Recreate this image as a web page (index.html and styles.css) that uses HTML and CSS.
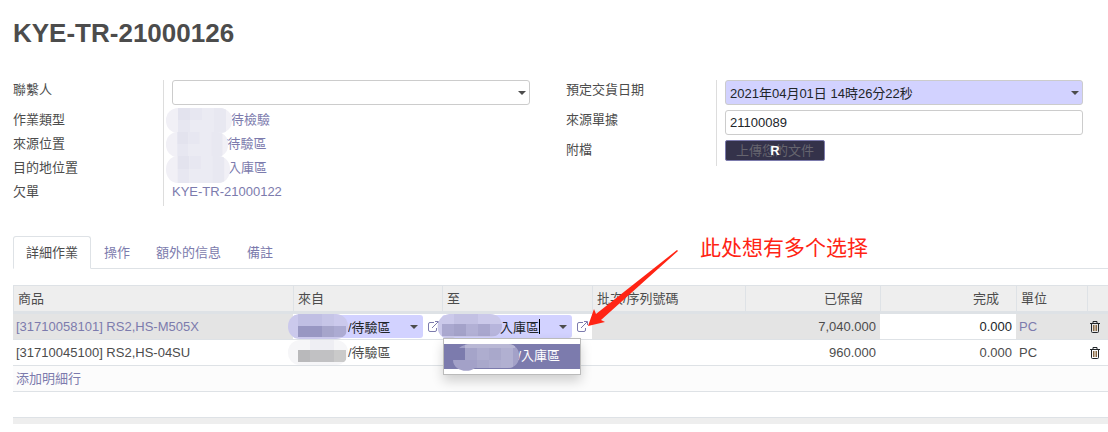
FILE: index.html
```html
<!DOCTYPE html>
<html lang="zh-Hant">
<head>
<meta charset="utf-8">
<title>KYE-TR-21000126</title>
<link rel="stylesheet" href="styles.css">
</head>
<body>

<main class="sheet">
  <h1 class="title">KYE-TR-21000126</h1>

  <div class="groups">
    <div class="group">
      <div class="row tall">
        <label for="partner">聯繫人</label>
        <div class="value"><div class="field caret"><input id="partner" type="text"></div></div>
      </div>
      <div class="row">
        <span class="label">作業類型</span>
        <div class="value"><a href="#" class="masked m1"><svg class="blob" width="68" height="26"><use href="#pale"/></svg>待檢驗</a></div>
      </div>
      <div class="row">
        <span class="label">來源位置</span>
        <div class="value"><a href="#" class="masked m2"><svg class="blob" width="64" height="26" viewBox="0 0 68 26" preserveAspectRatio="none"><use href="#pale"/></svg>/待驗區</a></div>
      </div>
      <div class="row">
        <span class="label">目的地位置</span>
        <div class="value"><a href="#" class="masked m3"><svg class="blob" width="66" height="28" viewBox="0 0 68 26" preserveAspectRatio="none"><use href="#pale"/></svg>入庫區</a></div>
      </div>
      <div class="row">
        <span class="label">欠單</span>
        <div class="value"><a href="#">KYE-TR-21000122</a></div>
      </div>
    </div>

    <div class="group">
      <div class="row tall">
        <label for="date">預定交貨日期</label>
        <div class="value"><div class="field caret required"><input id="date" type="text" value="2021年04月01日 14時26分22秒"></div></div>
      </div>
      <div class="row tall">
        <label for="origin">來源單據</label>
        <div class="value"><div class="field"><input id="origin" type="text" value="21100089"></div></div>
      </div>
      <div class="row">
        <span class="label">附檔</span>
        <div class="value"><button type="button" class="upload">上傳您的文件<b class="key">R</b></button></div>
      </div>
    </div>
  </div>

  <nav class="tabs">
    <a href="#" class="tab active">詳細作業</a>
    <a href="#" class="tab">操作</a>
    <a href="#" class="tab">額外的信息</a>
    <a href="#" class="tab">備註</a>
    <div class="note">此处想有多个选择
      <svg class="arrow" width="92" height="78" viewBox="0 0 92 78"><path d="M1 76L7 59L9 64L90 0L91 1L14 70L18 72Z" fill="#ff2414"/></svg>
    </div>
  </nav>

  <table class="lines">
    <colgroup>
      <col>
      <col class="c-from">
      <col class="c-to">
      <col class="c-lot">
      <col class="c-reserved">
      <col class="c-done">
      <col class="c-unit">
      <col class="c-del">
    </colgroup>
    <thead>
      <tr>
        <th>商品</th>
        <th>來自</th>
        <th>至</th>
        <th>批次/序列號碼</th>
        <th class="num">已保留</th>
        <th class="num">完成</th>
        <th>單位</th>
        <th></th>
      </tr>
    </thead>
    <tbody>
      <tr class="selected">
        <td><a href="#">[31710058101] RS2,HS-M505X</a></td>
        <td class="edit">
          <div class="picker">
            <div class="field caret required"><input class="from" type="text" aria-label="來自" value="/待驗區"></div>
            <a href="#" aria-label="來自"><svg class="ext" width="11" height="11"><use href="#external"/></svg></a>
            <svg class="blob" width="60" height="25"><use href="#violet"/></svg>
          </div>
        </td>
        <td class="edit">
          <div class="picker">
            <div class="field caret required"><input class="to" type="text" aria-label="至" value="入庫區"><span class="cursor"></span></div>
            <a href="#" aria-label="至"><svg class="ext" width="11" height="11"><use href="#external"/></svg></a>
            <svg class="blob" width="65" height="26"><use href="#violet-wide"/></svg>
            <div class="menu">
              <a href="#"><svg class="blob" width="67" height="27"><use href="#dark"/></svg>/入庫區</a>
            </div>
          </div>
        </td>
        <td></td>
        <td class="num">7,040.000</td>
        <td class="edit"><input class="qty" type="text" aria-label="完成" value="0.000"></td>
        <td><a href="#">PC</a></td>
        <td class="del"><button type="button" class="trash" aria-label="刪除"><svg width="10" height="12"><use href="#bin"/></svg></button></td>
      </tr>
      <tr>
        <td>[31710045100] RS2,HS-04SU</td>
        <td><span class="masked m2"><svg class="blob" width="60" height="26"><use href="#grey"/></svg>/待驗區</span></td>
        <td></td>
        <td></td>
        <td class="num">960.000</td>
        <td class="num">0.000</td>
        <td>PC</td>
        <td class="del"><button type="button" class="trash" aria-label="刪除"><svg width="10" height="12"><use href="#bin"/></svg></button></td>
      </tr>
      <tr class="add">
        <td colspan="8"><a href="#">添加明細行</a></td>
      </tr>
      <tr>
        <td colspan="8"></td>
      </tr>
    </tbody>
    <tfoot>
      <tr><td colspan="8"></td></tr>
    </tfoot>
  </table>
</main>

<svg class="defs" width="0" height="0">
  <defs>
    <clipPath id="pill"><rect width="66" height="25" rx="12"/></clipPath>
    <clipPath id="pill-s"><rect width="60" height="25" rx="12"/></clipPath>
    <clipPath id="pill-w"><path d="M12 0H53C69 0 69 23 53 23H18Q12 27 6 23C-2 19-2 2 12 0Z"/></clipPath>
    <clipPath id="pill-d"><path d="M6 4Q11 0 18 0H55C70 0 70 24 55 24H22C14 30 0 26 0 16H12V4Z"/></clipPath>
    <g id="pale" clip-path="url(#pill)">
      <path fill="#f1f0f6" d="M0 0h68v26H0z"/>
      <path fill="#e3e3ee" d="M12 0h12v12H12z"/>
      <path fill="#e7e7f1" d="M24 0h12v12H24zM12 12h12v14H12z"/>
      <path fill="#ebebf3" d="M36 0h12v12H36zM24 12h24v14H24z"/>
      <path fill="#e8e8f1" d="M48 0h12v26H48z"/>
    </g>
    <g id="violet" clip-path="url(#pill-s)">
      <path fill="#cbc9ec" d="M0 0h64v25H0z"/>
      <path fill="#c0bfe3" d="M10 0h24v12H10z"/>
      <path fill="#c6c5e7" d="M34 0h12v12H34z"/>
      <path fill="#9897c2" d="M10 12h24v11H10z"/>
      <path fill="#a6a5cb" d="M34 12h12v11H34z"/>
      <path fill="#acabd2" d="M46 12h12v11H46z"/>
    </g>
    <g id="violet-wide" clip-path="url(#pill-w)">
      <path fill="#cbc9ea" d="M0 0h65v26H0z"/>
      <path fill="#c3c1e3" d="M17 0h24v10H17z"/>
      <path fill="#aaa8cf" d="M5 10h12v12H5z"/>
      <path fill="#a4a2c9" d="M17 10h12v12H17z"/>
      <path fill="#b2b0d5" d="M29 10h12v12H29z"/>
      <path fill="#a9a7ce" d="M41 10h12v12H41z"/>
      <path fill="#b7b5dc" d="M53 10h12v12H53z"/>
    </g>
    <g id="grey" clip-path="url(#pill-s)">
      <path fill="#f6f6f8" d="M0 0h64v26H0z"/>
      <path fill="#eeeef3" d="M22 0h24v10H22z"/>
      <path fill="#b9b9bb" d="M10 10h12v12H10z"/>
      <path fill="#c1c1c3" d="M22 10h24v12H22z"/>
      <path fill="#cacaca" d="M46 10h12v12H46z"/>
    </g>
    <g id="dark" clip-path="url(#pill-d)">
      <path fill="#a3a1c8" d="M0 0h68v28H0z"/>
      <path fill="#b9b8d5" d="M12 0h50v4H12z"/>
      <path fill="#a5a4c9" d="M12 4h12v12H12z"/>
      <path fill="#aeadcf" d="M24 4h12v12H24zM36 16h12v10H36z"/>
      <path fill="#a9a8cb" d="M36 4h12v12H36zM24 16h12v10H24z"/>
      <path fill="#b1b0d1" d="M48 4h12v22H48z"/>
    </g>
    <g id="external" fill="none" stroke="#7c7bad">
      <path d="M6 1.500H2Q.5 1.500 .5 3V9Q.5 10.500 2 10.500H7Q8.500 10.500 8.500 9V7"/>
      <path d="M4 7L10 1M7 .5H10.500V4"/>
    </g>
    <g id="bin" fill="none" stroke="#212529">
      <path d="M0 2.500H10M3 2V.5H7V2M1.500 3V10.500Q1.500 11.500 2.500 11.500H7.500Q8.500 11.500 8.500 10.500V3"/>
      <path d="M3.500 4V10M5 4V10M6.500 4V10" stroke="#8a6a45"/>
    </g>
  </defs>
</svg>

</body>
</html>
```
FILE: styles.css
```css
* { box-sizing: border-box; }

body {
  margin: 0;
  background: #fff;
  color: #4c4c4c;
  font: 13px/20px "Liberation Sans", "Noto Sans CJK TC", sans-serif;
  overflow: hidden;
}

a { color: #7c7bad; text-decoration: none; }
input, button { font: inherit; }
.defs { position: absolute; }

.sheet { padding-left: 13px; }

.title {
  margin: 0;
  padding: 17px 0 31px;
  font-size: 26px;
  line-height: 32px;
}

/* form groups */
.groups {
  display: grid;
  grid-template-columns: 1fr 1fr;
  gap: 36px;
  align-items: start;
  padding-right: 25px;
}
.row {
  display: grid;
  grid-template-columns: 150px 1fr;
  min-height: 24px;
}
.row.tall { min-height: 30px; }
.value {
  padding-left: 8px;
  border-left: 1px solid #ddd;
}

.field { position: relative; }
.field input {
  display: block;
  width: 100%;
  height: 25px;
  padding: 0 4px 1px;
  border: 1px solid #ccc;
  border-radius: 3px;
  background: #fff;
  color: #212529;
}
.field.required input { background: #d2d2ff; }
.field.caret::after {
  content: "";
  position: absolute;
  right: 4px;
  top: 11px;
  border: 4px solid transparent;
  border-top-color: #4c4c4c;
  border-bottom: 0;
}

.masked { position: relative; }
.m1 { padding-left: 59px; }
.m2 { padding-left: 52px; }
.m3 { padding-left: 56px; }
.blob {
  position: absolute;
  left: -6px;
  top: -4px;
}

.upload {
  position: relative;
  display: block;
  height: 21px;
  margin-bottom: 5px;
  padding: 0 10px;
  border: 1px solid #7c7bad;
  border-radius: 2px;
  background: #34324a;
  color: #66656f;
  line-height: 19px;
}
.key {
  position: absolute;
  left: 0;
  right: 0;
  color: #fff;
}

/* notebook */
.tabs {
  position: relative;
  display: flex;
  margin-top: 30px;
  border-bottom: 1px solid #dee2e6;
}
.tab {
  margin-bottom: -1px;
  padding: 5px 12px;
  border: 1px solid transparent;
  line-height: 21px;
}
.tab.active {
  border-color: #dee2e6 #dee2e6 #fff;
  border-radius: 3px 3px 0 0;
  background: #fff;
  color: #4c4c4c;
}
.note {
  position: absolute;
  left: 687px;
  top: -6px;
  color: #ff2414;
  font: 21px/32px "Noto Sans CJK SC", sans-serif;
  white-space: nowrap;
}
.arrow {
  position: absolute;
  left: -113px;
  top: 20px;
  z-index: 2;
}

/* lines */
.lines {
  width: 100%;
  margin-top: 16px;
  border-collapse: separate;
  border-spacing: 0;
  table-layout: fixed;
}
.c-from { width: 149px; }
.c-to { width: 150px; }
.c-lot { width: 153px; }
.c-reserved { width: 135px; }
.c-done { width: 136px; }
.c-unit { width: 71px; }
.c-del { width: 21px; }

.lines th {
  height: 29px;
  padding: 0 4px;
  border: solid #dee2e6;
  border-width: 1px 0 3px 1px;
  background: #eee;
  font-weight: normal;
  text-align: left;
}
.lines td {
  height: 26px;
  padding: 0 3px;
  border-bottom: 1px solid #dee2e6;
  white-space: nowrap;
}
.lines th.num { padding-right: 17px; text-align: right; }
.lines td.num { padding-right: 4px; text-align: right; }
.lines .selected td { background: #e4e4e4; }
.lines .selected td.edit { padding: 0; background: #fff; }
.lines .add td { background: #fcfcfc; }
.lines tfoot td { height: 6px; background: #eee; border: 0; }

.picker {
  position: relative;
  display: flex;
  align-items: center;
  gap: 5px;
}
.picker .field { width: 130px; }
.picker .field input { height: 23px; border: 0; }
.picker .field.caret::after { right: 5px; top: 10px; }
.picker input.from { padding-left: 55px; }
.picker input.to { padding-left: 58px; }
.picker .blob { left: -5px; top: -1px; }
.lines .masked .blob { left: -8px; top: -5px; }
.ext { display: block; }
.cursor {
  position: absolute;
  left: 97px;
  top: 4px;
  width: 1px;
  height: 15px;
  background: #000;
}

.menu {
  position: absolute;
  left: 1px;
  top: 23px;
  z-index: 1;
  width: 138px;
  padding: 5px 0;
  border: 1px solid #bbb;
  background: #fff;
  box-shadow: 0 6px 12px rgba(0, 0, 0, .18);
}
.menu a {
  position: relative;
  display: block;
  padding: 2px 20px 3px;
  background: #7c7bad;
  color: #fff;
  text-align: right;
}
.menu .blob { left: 9px; top: 0; }

.qty {
  display: block;
  width: 100%;
  height: 23px;
  padding: 0 4px 1px;
  border: 0;
  background: none;
  color: #212529;
  text-align: right;
}
.trash {
  display: block;
  padding: 0;
  border: 0;
  background: none;
}
.trash svg { display: block; }
```
